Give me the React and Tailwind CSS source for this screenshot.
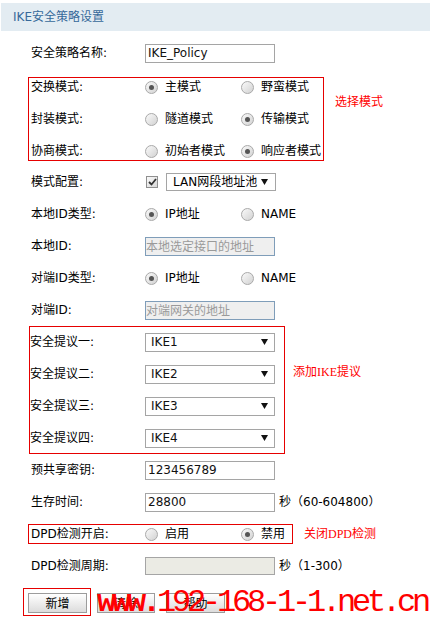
import React from "react";

const ROW_FONT = "font-['DejaVu_Sans','Noto_Sans_CJK_SC',sans-serif]";

function Radio({ checked }) {
  return (
    <span className="inline-flex w-[13px] h-[13px] rounded-full border border-[#a9a9a9] bg-linear-to-br from-[#fafafa] to-[#d2d2d2] items-center justify-center shrink-0">
      {checked && <span className="w-[5px] h-[5px] rounded-full bg-[#555555]" />}
    </span>
  );
}

function RadioPair({ a, b, sel }) {
  return (
    <div className="flex items-center">
      <div className="w-[96px] flex items-center">
        <Radio checked={sel === 0} />
        <span className="ml-[7px]">{a}</span>
      </div>
      <div className="flex items-center">
        <Radio checked={sel === 1} />
        <span className="ml-[7px]">{b}</span>
      </div>
    </div>
  );
}

function Tri() {
  return (
    <svg width="7" height="6" viewBox="0 0 7 6" className="shrink-0">
      <path d="M0 0 H7 L3.5 6 Z" fill="#111" />
    </svg>
  );
}

function TextInput({ value }) {
  return (
    <div className="w-[130px] h-[19px] border border-[#a5a5a5] bg-white flex items-center pl-[2px] font-['DejaVu_Sans',sans-serif] text-[12px] text-[#111]">
      {value}
    </div>
  );
}

function DisabledInput({ placeholder }) {
  return (
    <div className="w-[130px] h-[19px] border border-[#7f9db9] bg-[#efefef] flex items-center text-[#9a9a9a] font-['Noto_Sans_CJK_SC',sans-serif] text-[12px]">
      {placeholder}
    </div>
  );
}

function IkeSelect({ value }) {
  return (
    <div className="w-[130px] h-[19px] border border-[#a5a5a5] bg-white flex items-center justify-between pl-[5px] pr-[6px] font-['DejaVu_Sans',sans-serif] text-[12px] text-[#111]">
      <span>{value}</span>
      <Tri />
    </div>
  );
}

function Button({ children, w }) {
  return (
    <div
      className={`${w} h-[20px] border border-[#9c9c9c] bg-linear-to-b from-[#ffffff] to-[#dcdcdc] flex items-center justify-center text-[12px] text-black font-['Noto_Sans_CJK_SC',sans-serif]`}
    >
      {children}
    </div>
  );
}

function Row({ label, children, extra }) {
  return (
    <div className="h-[32px] flex items-center">
      <div className="w-[145px] pl-[31px] shrink-0">{label}</div>
      {children}
      {extra}
    </div>
  );
}

export default function App() {
  return (
    <div
      className={`relative w-[430px] h-[618px] overflow-hidden bg-white text-[12px] text-black ${ROW_FONT}`}
    >
      <div className="mt-[3px] ml-[1px] h-[28px] bg-[#e3ecf2] flex items-center pl-[12px] text-[#36699a]">
        IKE安全策略设置
      </div>

      <div className="mt-[6px]">
        <Row label="安全策略名称:">
          <TextInput value="IKE_Policy" />
        </Row>
      </div>

      <div className="mt-[8px] flex">
        <div className="ml-[28px] w-[296px] border border-[#e60000] flex flex-col gap-[14px]">
          <div className="h-[18px] flex items-center">
            <div className="w-[116px] pl-[2px]">交换模式:</div>
            <RadioPair a="主模式" b="野蛮模式" sel={0} />
          </div>
          <div className="h-[18px] flex items-center">
            <div className="w-[116px] pl-[2px]">封装模式:</div>
            <RadioPair a="隧道模式" b="传输模式" sel={1} />
          </div>
          <div className="h-[18px] flex items-center">
            <div className="w-[116px] pl-[2px]">协商模式:</div>
            <RadioPair a="初始者模式" b="响应者模式" sel={1} />
          </div>
        </div>
        <div className="ml-[11px] mt-[17px] h-[17px] leading-[17px] text-[#ff0000] font-['Liberation_Serif','Noto_Sans_CJK_SC',serif]">
          选择模式
        </div>
      </div>

      <div className="mt-[5px]">
        <Row label="模式配置:">
          <div className="ml-[1px] w-[12px] h-[12px] border border-[#8f8f8f] bg-linear-to-br from-[#fafafa] to-[#d8d8d8] flex items-center justify-center">
            <svg width="9" height="8" viewBox="0 0 9 8">
              <path d="M1 4 L3.5 6.5 L8 1" stroke="#333" strokeWidth="1.8" fill="none" />
            </svg>
          </div>
          <div className="ml-[8px] w-[110px] h-[18px] border border-[#a5a5a5] bg-white flex items-center justify-between pl-[6px] pr-[7px]">
            <span>LAN网段地址池</span>
            <Tri />
          </div>
        </Row>
        <Row label="本地ID类型:">
          <RadioPair a="IP地址" b="NAME" sel={0} />
        </Row>
        <Row label="本地ID:">
          <DisabledInput placeholder="本地选定接口的地址" />
        </Row>
        <Row label="对端ID类型:">
          <RadioPair a="IP地址" b="NAME" sel={0} />
        </Row>
        <Row label="对端ID:">
          <DisabledInput placeholder="对端网关的地址" />
        </Row>
      </div>

      <div className="flex">
        <div className="ml-[29px] w-[256px] border border-[#e60000] flex flex-col gap-[2px]">
          {[
            ["安全提议一:", "IKE1"],
            ["安全提议二:", "IKE2"],
            ["安全提议三:", "IKE3"],
            ["安全提议四:", "IKE4"],
          ].map(([l, v]) => (
            <div key={l} className="h-[30px] flex items-center">
              <div className="w-[115px]">{l}</div>
              <IkeSelect value={v} />
            </div>
          ))}
        </div>
        <div className="ml-[8px] mt-[38px] h-[17px] leading-[17px] text-[#ff0000] font-['Liberation_Serif','Noto_Sans_CJK_SC',serif]">
          添加IKE提议
        </div>
      </div>

      <Row label="预共享密钥:">
        <TextInput value="123456789" />
      </Row>
      <Row label="生存时间:" extra={<span className="ml-[4px]">秒（60-604800）</span>}>
        <TextInput value="28800" />
      </Row>

      <div className="mt-[6px] flex items-center">
        <div className="ml-[28px] w-[265px] h-[20px] border border-[#e60000] flex items-center">
          <div className="w-[116px] pl-[2px]">DPD检测开启:</div>
          <RadioPair a="启用" b="禁用" sel={1} />
        </div>
        <div className="ml-[11px] text-[#ff0000] font-['Liberation_Serif','Noto_Sans_CJK_SC',serif]">
          关闭DPD检测
        </div>
      </div>

      <div className="mt-[6px]">
        <Row label="DPD检测周期:" extra={<span className="ml-[4px]">秒（1-300）</span>}>
          <div className="w-[130px] h-[18px] border border-[#a5a5a5] bg-[#ebebe4]" />
        </Row>
      </div>

      <div className="mt-[6px] flex items-start">
        <div className="ml-[23px] border border-[#e60000] pt-[4px] pb-[2px] pl-[4px] pr-[3px]">
          <Button w="w-[59px]">新增</Button>
        </div>
        <div className="mt-[5px] ml-[6px]">
          <Button w="w-[58px]">清除</Button>
        </div>
        <div className="mt-[5px] ml-[11px]">
          <Button w="w-[59px]">帮助</Button>
        </div>
      </div>

      <div className="absolute left-[97px] top-[587px] text-[32px] leading-none tracking-[-4.2px] text-[#ff0000] font-['Liberation_Mono',monospace] whitespace-nowrap">
        <span className="font-bold">www.</span>192-168-1-1.net.cn
      </div>
    </div>
  );
}
